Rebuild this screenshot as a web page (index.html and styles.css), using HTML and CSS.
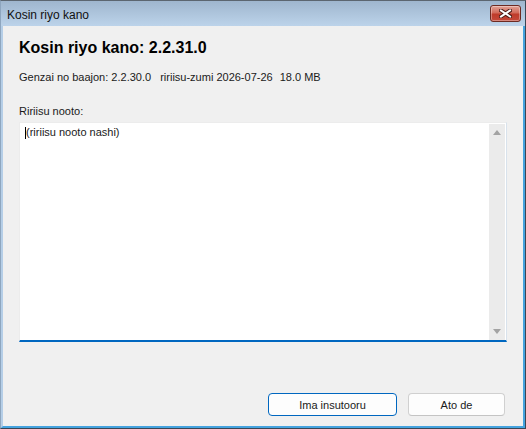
FILE: index.html
```html
<!DOCTYPE html>
<html>
<head>
<meta charset="utf-8">
<title>Kosin riyo kano</title>
<link rel="stylesheet" href="styles.css">
</head>
<body>
<div class="window">
  <div class="titlebar">
    <span class="title">Kosin riyo kano</span>
    <button class="close" aria-label="Close">
      <svg width="13" height="9" viewBox="0 0 13 9">
        <path d="M2 1.5 L11 7.5 M11 1.5 L2 7.5" stroke="#4a1a16" stroke-width="4" stroke-linecap="square" fill="none"/>
        <path d="M2 1.5 L11 7.5 M11 1.5 L2 7.5" stroke="#ffffff" stroke-width="2" stroke-linecap="square" fill="none"/>
      </svg>
    </button>
  </div>
  <div class="client">
    <h1 class="heading">Kosin riyo kano: 2.2.31.0</h1>
    <div class="info">
      <span>Genzai no baajon: 2.2.30.0</span>
      <span class="sep1">ririisu-zumi 2026-07-26</span>
      <span class="sep2">18.0 MB</span>
    </div>
    <div class="label">Ririisu nooto:</div>
    <div class="textbox">
      <div class="text"><span class="caret"></span>(ririisu nooto nashi)</div>
      <div class="scrollbar">
        <span class="arrow up"></span>
        <span class="arrow down"></span>
      </div>
    </div>
    <div class="buttons">
      <button class="btn primary">Ima insutooru</button>
      <button class="btn">Ato de</button>
    </div>
  </div>
</div>
</body>
</html>
```

FILE: styles.css
```css
* { box-sizing: border-box; }
html, body { margin: 0; padding: 0; }
body {
  width: 526px;
  height: 429px;
  font-family: "Liberation Sans", Arial, sans-serif;
  background: #ffffff;
  overflow: hidden;
}
.window {
  width: 526px;
  height: 429px;
  border: 1px solid #3a4654;
  border-left-color: #8ea6bf;
  border-top-color: #5c6670;
  display: flex;
  flex-direction: column;
}
.titlebar {
  height: 25px;
  flex: none;
  display: flex;
  align-items: flex-start;
  background: linear-gradient(#9fb6ce, #bcd3ea);
  padding-left: 6px;
}
.title {
  font-size: 12px;
  line-height: 24px;
  padding-top: 2px;
  color: #111111;
}
.close {
  margin: 4px 4px 0 auto;
  width: 31px;
  height: 17px;
  padding: 0;
  border: 1px solid #6d2a22;
  border-radius: 3px;
  background: linear-gradient(#e3a396 0%, #d26a5a 45%, #bf3b2a 55%, #c4493a 100%);
  box-shadow: inset 0 0 0 1px rgba(255,255,255,0.35);
  display: flex;
  align-items: center;
  justify-content: center;
}
.close svg { display: block; }
.client {
  flex: 1;
  display: flex;
  flex-direction: column;
  background: #f0f0f0;
  border-style: solid;
  border-width: 0 2px 2px 2px;
  border-color: #45a3df;
  border-left-color: #b5cee7;
  padding: 12px 16px 10px 16px;
}
.heading {
  margin: 0;
  font-size: 16px;
  line-height: 20px;
  font-weight: bold;
  color: #000000;
}
.info {
  margin-top: 12px;
  font-size: 11px;
  line-height: 14px;
  color: #1a1a1a;
  white-space: nowrap;
}
.sep1 { margin-left: 6px; }
.sep2 { margin-left: 4px; }
.label {
  margin-top: 20px;
  font-size: 11px;
  line-height: 14px;
  color: #1a1a1a;
}
.textbox {
  margin-top: 4px;
  height: 220px;
  flex: none;
  display: flex;
  background: #ffffff;
  border: 1px solid #ececec;
  border-right-color: #d8e2ec;
  border-bottom: 2px solid #0067c0;
}
.text {
  flex: 1;
  padding: 2px 0 0 5px;
  font-size: 11px;
  line-height: 14px;
  color: #1a1a1a;
}
.caret {
  display: inline-block;
  width: 1px;
  height: 12px;
  background: #000000;
  vertical-align: -3px;
}
.scrollbar {
  width: 16px;
  margin: 1px 1px 0 0;
  background: #ebebeb;
  display: flex;
  flex-direction: column;
  justify-content: space-between;
  align-items: center;
  padding: 6px 0 6px 0;
}
.arrow {
  width: 0;
  height: 0;
  border-left: 4px solid transparent;
  border-right: 4px solid transparent;
}
.arrow.up { border-bottom: 5px solid #a3a3a3; }
.arrow.down { border-top: 5px solid #a3a3a3; }
.buttons {
  margin-top: auto;
  display: flex;
  justify-content: flex-end;
  gap: 11px;
  padding-right: 2px;
}
.btn {
  height: 23px;
  width: 97px;
  font-family: "Liberation Sans", Arial, sans-serif;
  font-size: 11px;
  color: #1a1a1a;
  background: #fdfdfd;
  border: 1px solid #d0d0d0;
  border-bottom-color: #c4c4c4;
  border-radius: 4px;
  padding: 0;
}
.btn.primary {
  width: 129px;
  border-color: #0067c0;
}
```
